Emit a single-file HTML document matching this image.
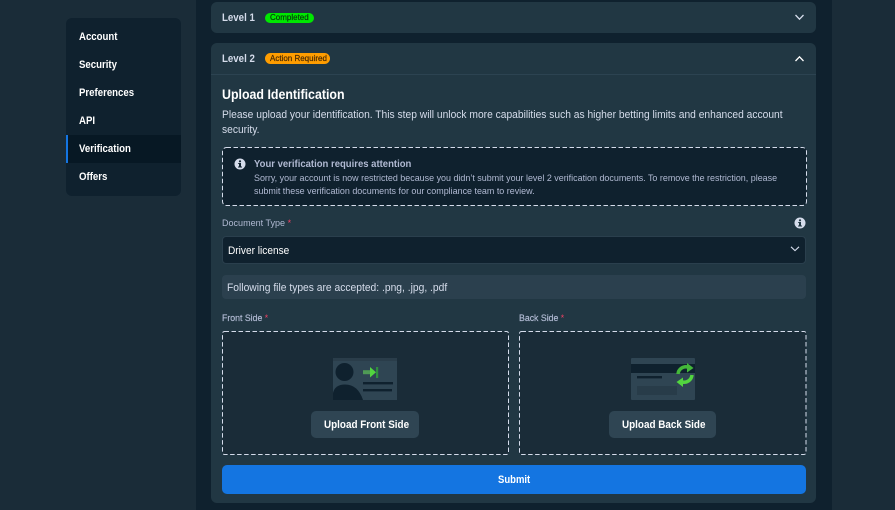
<!DOCTYPE html>
<html><head><meta charset="utf-8">
<style>
html,body{margin:0;padding:0}
body{width:895px;height:510px;overflow:hidden;position:relative;background:#1a2c38;font-family:"Liberation Sans",sans-serif;color:#fff}
div,svg{position:absolute}
.t{position:absolute;white-space:nowrap;line-height:16px;transform-origin:0 50%}
.nav{left:78.5px;font-size:11px;font-weight:bold;color:#fff;transform:scaleX(.875)}
.lev{left:221.5px;font-size:11px;font-weight:bold;color:#d5dceb;transform:scaleX(.88)}
.bdg{left:270px;font-size:8px;-webkit-text-stroke:.2px currentColor}
.lab{font-size:9.5px;color:#b1bad3;-webkit-text-stroke:.2px #b1bad3;transform:scaleX(.92)}
.card{background:#213743;border-radius:6px;left:211px;width:605px}
.btn{background:#2f4553;border-radius:5px;top:411px;height:27px}
.up{font-size:10.8px;font-weight:bold;color:#fff;transform:scaleX(.915);top:417px}
</style></head><body>
<div style="left:196px;top:0;width:636px;height:510px;background:#0f212e"></div>

<!-- sidebar -->
<div style="left:66px;top:18px;width:115px;height:178px;background:#0f212e;border-radius:6px"></div>
<div style="left:66px;top:135px;width:115px;height:28px;background:#071824"></div>
<div style="left:66px;top:135px;width:2px;height:28px;background:#1475e1"></div>
<span class="t nav" style="top:29px">Account</span>
<span class="t nav" style="top:57px">Security</span>
<span class="t nav" style="top:85px">Preferences</span>
<span class="t nav" style="top:113px">API</span>
<span class="t nav" style="top:141px">Verification</span>
<span class="t nav" style="top:169px">Offers</span>

<!-- level 1 -->
<div class="card" style="top:2px;height:31px"></div>
<span class="t lev" style="top:10px">Level 1</span>
<div style="left:265px;top:13px;width:49px;height:10px;border-radius:5px;background:#00e701"></div>
<span class="t bdg" style="top:10px;color:#05400a">Completed</span>
<svg style="left:794px;top:13px" width="11" height="9" viewBox="0 0 11 9"><path d="M1.5 2 L5.5 6.2 L9.5 2" fill="none" stroke="#d5dceb" stroke-width="1.3"/></svg>

<!-- level 2 -->
<div class="card" style="top:43px;height:460px"></div>
<div style="left:211px;top:74px;width:605px;height:1px;background:#2c4351"></div>
<span class="t lev" style="top:51px">Level 2</span>
<div style="left:265px;top:53px;width:65px;height:11px;border-radius:5.5px;background:#ff9d00"></div>
<span class="t bdg" style="top:51px;color:#4b2a00">Action Required</span>
<svg style="left:794px;top:54px" width="11" height="9" viewBox="0 0 11 9"><path d="M1.5 7 L5.5 2.8 L9.5 7" fill="none" stroke="#fff" stroke-width="1.3"/></svg>

<span class="t" style="left:221.5px;top:87px;font-size:13.5px;font-weight:bold;color:#fff;transform:scaleX(.918)">Upload Identification</span>
<span class="t" style="left:221.5px;top:107px;font-size:11px;color:#d5dceb;transform:scaleX(.933)">Please upload your identification. This step will unlock more capabilities such as higher betting limits and enhanced account</span>
<span class="t" style="left:221.5px;top:122px;font-size:11px;color:#d5dceb;transform:scaleX(.933)">security.</span>

<!-- alert -->
<svg style="left:221px;top:146px" width="586" height="60"><rect x="1.5" y="1.5" width="584" height="58" rx="4" fill="#0f212e" stroke="#d5dceb" stroke-width="1" stroke-dasharray="4.5 2.5"/></svg>
<svg style="left:234px;top:158px" width="12" height="12" viewBox="0 0 12 12"><circle cx="6" cy="6" r="5.5" fill="#d5dceb"/><rect x="5" y="5" width="2" height="4" fill="#0f212e"/><rect x="4" y="8.5" width="4" height="1" fill="#0f212e"/><rect x="4.2" y="5" width="1.5" height="1" fill="#0f212e"/><circle cx="6" cy="3.3" r="1.1" fill="#0f212e"/></svg>
<span class="t" style="left:253.5px;top:156px;font-size:10.5px;font-weight:bold;color:#b1bad3;transform:scaleX(.906)">Your verification requires attention</span>
<span class="t" style="left:253.5px;top:170px;font-size:9.4px;color:#b1bad3;transform:scaleX(.953)">Sorry, your account is now restricted because you didn’t submit your level 2 verification documents. To remove the restriction, please</span>
<span class="t" style="left:253.5px;top:183px;font-size:9.4px;color:#b1bad3;transform:scaleX(.953)">submit these verification documents for our compliance team to review.</span>

<!-- document type -->
<span class="t" style="left:221.5px;top:216px;font-size:9.5px;color:#b1bad3;transform:scaleX(.95)">Document Type <span style="color:#ed4163">*</span></span>
<svg style="left:794px;top:217px" width="12" height="12" viewBox="0 0 12 12"><circle cx="6" cy="6" r="5.5" fill="#d5dceb"/><rect x="5" y="5" width="2" height="4" fill="#213743"/><rect x="4" y="8.5" width="4" height="1" fill="#213743"/><rect x="4.2" y="5" width="1.5" height="1" fill="#213743"/><circle cx="6" cy="3.3" r="1.1" fill="#213743"/></svg>
<div style="left:222px;top:236px;width:582px;height:26px;background:#0f212e;border:1px solid #2a3f4d;border-radius:4px"></div>
<span class="t" style="left:228px;top:243px;font-size:11px;color:#fff;transform:scaleX(.92)">Driver license</span>
<svg style="left:790px;top:245px" width="10" height="8" viewBox="0 0 10 8"><path d="M1 1.8 L5 5.6 L9 1.8" fill="none" stroke="#d5dceb" stroke-width="1.1"/></svg>

<div style="left:222px;top:275px;width:584px;height:24px;background:#2b404e;border-radius:4px"></div>
<span class="t" style="left:226.5px;top:280px;font-size:10.8px;color:#d5dceb;transform:scaleX(.953)">Following file types are accepted: .png, .jpg, .pdf</span>

<span class="t lab" style="left:221.5px;top:311px">Front Side <span style="color:#ed4163;-webkit-text-stroke:0">*</span></span>
<span class="t lab" style="left:519px;top:311px">Back Side <span style="color:#ed4163;-webkit-text-stroke:0">*</span></span>

<!-- dropzones -->
<svg style="left:221px;top:330px" width="289" height="126"><rect x="1.5" y="1.5" width="286" height="123" rx="2" fill="#1a2c38" stroke="#d5dceb" stroke-width="1" stroke-dasharray="4.5 2.5"/></svg>
<svg style="left:518px;top:330px" width="289" height="126"><rect x="1.5" y="1.5" width="286.5" height="123" rx="2" fill="#1a2c38" stroke="#d5dceb" stroke-width="1" stroke-dasharray="4.5 2.5"/></svg>

<!-- front icon -->
<svg style="left:333px;top:358px" width="65" height="43" viewBox="0 0 65 43">
<rect x="0" y="1" width="64" height="41" fill="#2f4553"/>
<rect x="0" y="0" width="64" height="3" fill="#2a3d4a"/>
<circle cx="11.5" cy="14" r="9" fill="#0f212e"/>
<path d="M0 42 V35 Q2 26.5 12 26.5 Q25 26.5 30 42 Z" fill="#0f212e"/>
<rect x="30" y="24" width="30" height="2.4" fill="#0f212e"/>
<rect x="30" y="31" width="29" height="2.4" fill="#0f212e"/>
<rect x="30" y="12.2" width="7" height="4" fill="#4f9a55"/>
<path d="M37 9 L43 14.2 L37 19.5 Z" fill="#52d63f"/>
<rect x="43" y="9" width="2.2" height="11" fill="#2f8f3f"/>
</svg>

<!-- back icon -->
<svg style="left:630px;top:358px" width="66" height="43" viewBox="0 0 66 43">
<rect x="1" y="0" width="64" height="42" rx="1" fill="#2f4553"/>
<rect x="1" y="6" width="64" height="9" fill="#0f212e"/>
<rect x="7" y="18" width="25" height="2.4" fill="#0f212e"/>
<rect x="7" y="28" width="40" height="9" fill="#283c49"/>
<path d="M48 16 A8 8 0 0 1 58 9" fill="none" stroke="#44b83a" stroke-width="3.5"/>
<path d="M57 5 L63.5 10 L57 14.5 Z" fill="#44b83a"/>
<path d="M62 17 A8 8 0 0 1 52 24" fill="none" stroke="#52d63f" stroke-width="3.5"/>
<path d="M53 19.5 L46.5 24 L53 29 Z" fill="#52d63f"/>
</svg>

<div class="btn" style="left:311px;width:108px"></div>
<span class="t up" style="left:323.5px">Upload Front Side</span>
<div class="btn" style="left:609px;width:107px"></div>
<span class="t up" style="left:621.5px">Upload Back Side</span>

<div style="left:222px;top:465px;width:584px;height:29px;background:#1475e1;border-radius:5px"></div>
<span class="t" style="left:498px;top:472px;font-size:10.8px;font-weight:bold;color:#fff;transform:scaleX(.88)">Submit</span>
</body></html>
